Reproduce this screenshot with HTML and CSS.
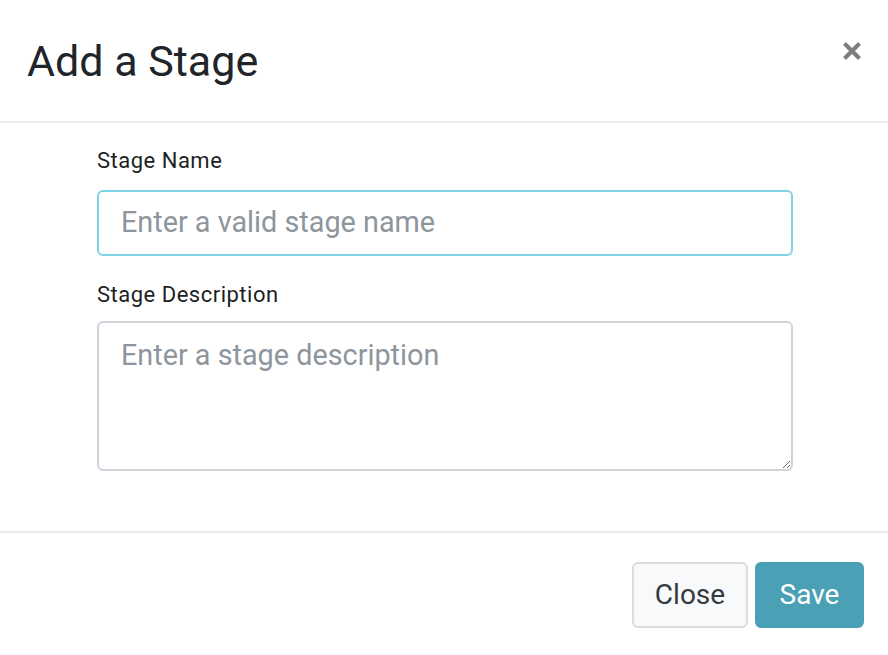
FILE: index.html
```
<!DOCTYPE html>
<html>
<head>
<meta charset="utf-8">
<link rel="stylesheet" href="styles.css">
</head>
<body>
<div class="modal">
  <div class="modal-header">
    <h1 class="modal-title">Add a Stage</h1>
    <button class="close" aria-label="Close">
      <svg width="20" height="20" viewBox="0 0 20 20"><path d="M2.5 2.5 L17.5 17.5 M17.5 2.5 L2.5 17.5" stroke="#7f7f7f" stroke-width="4.2" stroke-linecap="butt"/></svg>
    </button>
  </div>
  <div class="modal-body">
    <label class="label label-first">Stage Name</label>
    <input class="control input-focus" type="text" placeholder="Enter a valid stage name">
    <label class="label label-second">Stage Description</label>
    <textarea class="control textarea" placeholder="Enter a stage description"></textarea>
  </div>
  <div class="modal-footer">
    <button class="btn btn-light">Close</button>
    <button class="btn btn-save">Save</button>
  </div>
</div>
</body>
</html>
```
FILE: styles.css
```
* { box-sizing: border-box; }
html, body { margin: 0; padding: 0; background: #fff; }
body { font-family: Roboto, "Liberation Sans", sans-serif; color: #212529; width: 888px; height: 655px; overflow: hidden; }
.modal { width: 888px; height: 655px; display: flex; flex-direction: column; }
.modal-header {
  height: 123px;
  border-bottom: 2px solid #e9ecef;
  display: flex;
  justify-content: space-between;
  align-items: flex-start;
  padding: 35px 26px 0 27px;
}
.modal-title { margin: 0; font-size: 43px; font-weight: 400; line-height: 52px; }
.close { border: 0; background: transparent; padding: 0; margin-top: 6px; margin-right: 0; width: 20px; height: 20px; cursor: pointer; }
.close svg { display: block; }
.modal-body { padding: 23px 95px 0 97px; height: 410px; display: flex; flex-direction: column; border-bottom: 2px solid #e9ecef; }
.label { display: block; font-size: 22px; line-height: 30px; font-weight: 400; letter-spacing: 0.5px; color: #1c1f23; }
.label-first { margin-bottom: 14px; }
.label-second { margin-top: 24px; margin-bottom: 11px; }
.control {
  display: block;
  width: 100%;
  font-family: inherit;
  font-size: 28.8px;
  line-height: 42px;
  padding: 9px 22px 11px;
  border: 2px solid #ced4da;
  border-radius: 6px;
  color: #495057;
  background: #fff;
  outline: none;
}
.control::placeholder { color: #8e959c; opacity: 1; }
.input-focus { height: 66px; border-color: #80d2e6; }
.textarea { height: 150px; resize: vertical; padding-top: 11px; }
.modal-footer { flex: 1; display: flex; justify-content: flex-end; align-items: flex-start; padding: 29px 24px 0 0; gap: 7px; }
.btn {
  font-family: inherit;
  font-size: 28px;
  line-height: 42px;
  height: 66px;
  padding: 10px 20px;
  border-radius: 6px;
  border: 2px solid transparent;
  cursor: pointer;
}
.btn-light { background: #f8f9fa; border-color: #dcdcdc; color: #343a40; width: 116px; }
.btn-save { background: #4aa0b5; border-color: #4aa0b5; color: #fff; width: 109px; }
```
